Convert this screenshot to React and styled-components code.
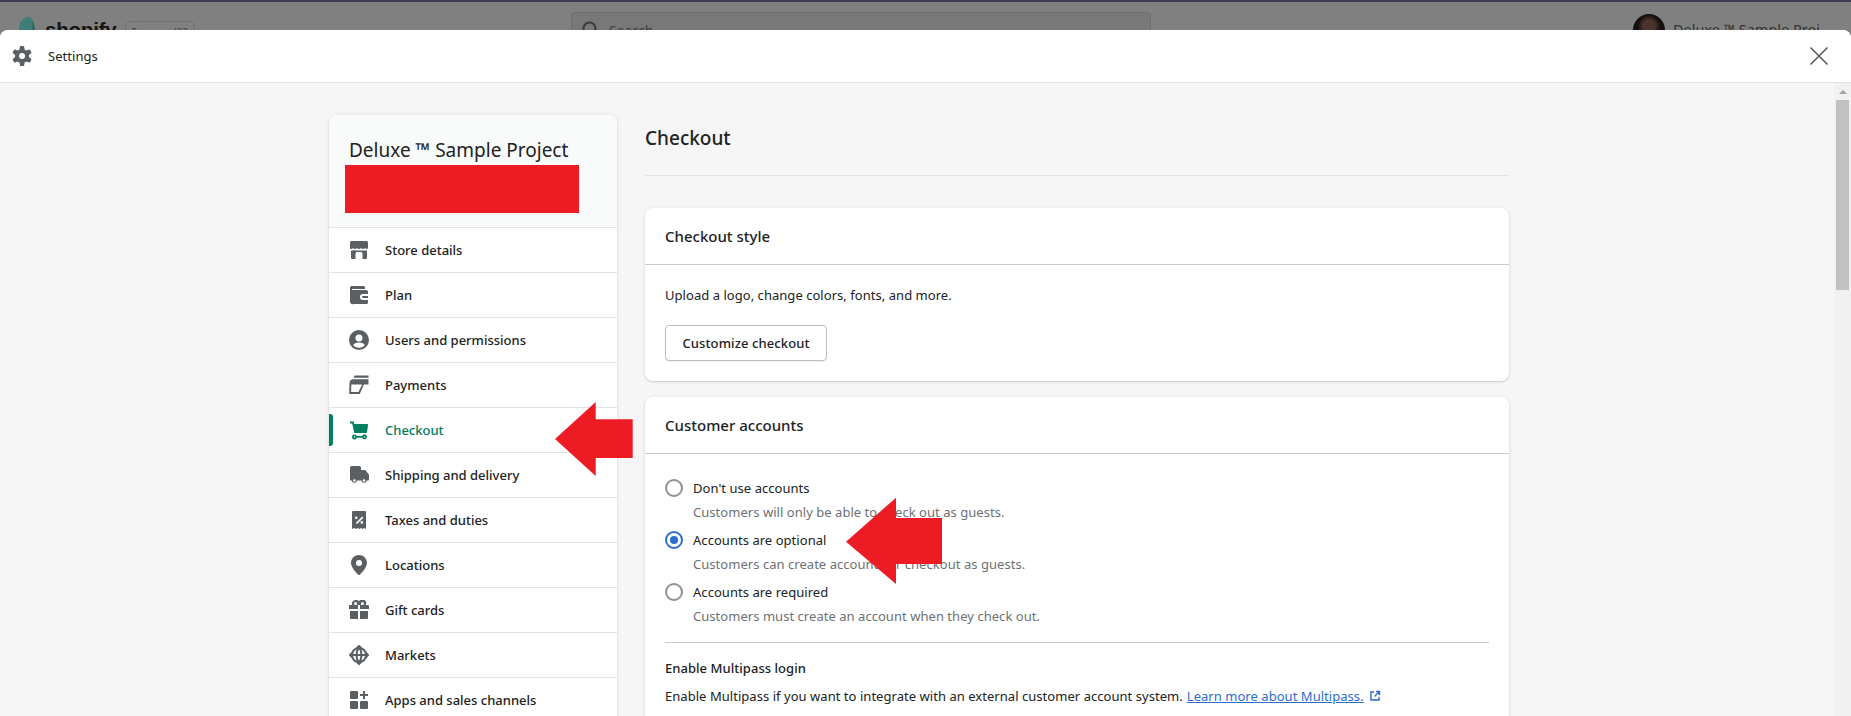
import React from "react";
import styled, { createGlobalStyle } from "styled-components";

const FONT = `"Noto Sans", "Open Sans", "Liberation Sans", sans-serif`;

const Global = createGlobalStyle`
  html, body { margin: 0; padding: 0; height: 100%; overflow: hidden; background: #808080; }
  body { font-family: ${FONT}; font-size: 14px; color: #202223; }
  * { box-sizing: border-box; }
`;

const Page = styled.div`position: relative; width: 1851px; height: 716px; overflow: hidden; display: flex; flex-direction: column;`;
const TopEdge = styled.div`height: 2px; background: #3a3c50; flex: none;`;
const Backdrop = styled.header`
  height: 28px; flex: none; overflow: hidden; background: #808080; display: flex; align-items: flex-start; color: #333;
  padding: 10px 32px 0 18px;
`;
const Brand = styled.div`display: flex; align-items: flex-start; width: 553px;`;
const BrandMark = styled.svg`margin-top: 4px; flex: none;`;
const BrandName = styled.span`margin: 6px 0 0 7px; font-family: "Liberation Sans", sans-serif; font-weight: 700; font-size: 20.5px; line-height: 24px; color: #141414; letter-spacing: -0.2px;`;
const Badge = styled.span`margin: 9px 0 0 8px; border: 1px solid #707070; border-radius: 6px; padding: 0 6px; font-size: 10px; line-height: 20px; height: 22px; color: #404040;`;
const SearchBox = styled.div`width: 580px; height: 36px; background: #787878; border: 1px solid #6e6e6e; border-radius: 4px; display: flex; align-items: center; gap: 8px; padding-left: 9px; font-size: 14px; color: #3d3d3d;`;
const Account = styled.div`margin: 2px 0 0 auto; display: flex; align-items: flex-start; gap: 8px;`;
const Avatar = styled.span`width: 32px; height: 32px; border-radius: 50%; background: radial-gradient(circle at 50% 38%, #4a332c 0 24%, #140f0f 44%); flex: none;`;
const AccountName = styled.span`font-size: 14.5px; line-height: 30px; color: #333; white-space: nowrap; width: 146px; overflow: hidden;`;

const Modal = styled.div`flex: 1; min-height: 0; background: #f6f6f7; border-radius: 8px 8px 0 0; display: flex; flex-direction: column; overflow: hidden;`;
const ModalBar = styled.div`height: 53px; flex: none; background: #fff; border-bottom: 1px solid #e1e3e5; display: flex; align-items: center; padding: 0 22px 0 12px; gap: 16px;`;
const ModalTitle = styled.span`font-size: 13px; line-height: 20px; color: #202223; letter-spacing: .04px;`;
const CloseButton = styled.button`margin-left: auto; background: none; border: 0; padding: 0; width: 20px; height: 20px; display: flex; color: #5c5f62;`;

const ModalBody = styled.div`flex: 1; min-height: 0; display: flex;`;
const Scroller = styled.div`flex: 1; min-width: 0; overflow: hidden; padding: 32px 0 0 329px; display: grid; grid-template-columns: 288px 864px; column-gap: 28px; align-items: start;`;

const Track = styled.div`width: 17px; flex: none; background: #f1f1f1; display: flex; flex-direction: column; align-items: center; padding-top: 7px;`;
const TrackArrow = styled.span`width: 0; height: 0; border-left: 4px solid transparent; border-right: 4px solid transparent; border-bottom: 4px solid #a3a3a3;`;
const Thumb = styled.div`width: 13px; height: 190px; margin-top: 6px; background: #c1c1c1;`;

const Nav = styled.nav`background: #fff; border-radius: 8px 8px 0 0; box-shadow: 0 0 5px rgba(23,24,24,.08), 0 1px 2px rgba(0,0,0,.12);`;
const NavHead = styled.div`height: 113px; background: #f9fafa; padding: 22px 16px 0 16px; border-radius: 8px 8px 0 0; border-bottom: 1px solid #e1e3e5;`;
const StoreName = styled.div`margin-left: 4px; font-size: 19px; line-height: 26px; color: #202223;`;
const Redaction = styled.div`width: 234px; height: 48px; margin-top: 2px; background: #ed1c24;`;
const NavItem = styled.a`
  position: relative; height: 45px; display: flex; align-items: center; gap: 16px; padding-left: 20px;
  border-bottom: 1px solid #e1e3e5; font-size: 13px; font-weight: 500; color: ${p => (p.$active ? "#007a5a" : "#202223")};
  & > svg { color: ${p => (p.$active ? "#008060" : "#5c5f62")}; flex: none; }
  ${p => p.$active && `&::before { content: ""; position: absolute; left: 0; top: 6px; bottom: 6px; width: 4px; border-radius: 0 3px 3px 0; background: #008060; }`}
`;

const Main = styled.main`display: flex; flex-direction: column;`;
const PageTitle = styled.h1`margin: 8px 0 0; font-size: 19px; font-weight: 500; line-height: 30px; color: #202223;`;
const Rule = styled.hr`margin: 22px 0 32px; border: 0; border-top: 1px solid #e1e3e5;`;
const Card = styled.section`background: #fff; border-radius: 8px; box-shadow: 0 0 5px rgba(23,24,24,.05), 0 1px 2px rgba(0,0,0,.15); margin-bottom: 16px;`;
const CardHead = styled.div`height: 57px; padding: 0 20px; display: flex; align-items: center; border-bottom: 1px solid #c9cccf;`;
const CardTitle = styled.h2`margin: 0; font-size: 15px; font-weight: 500; line-height: 20px; color: #202223;`;
const CardBody = styled.div`padding: 20px; letter-spacing: .04px;`;
const BodyText = styled.p`margin: 0; font-size: 13px; line-height: 20px; color: #202223;`;
const Button = styled.button`margin-top: 20px; height: 36px; width: 162px; background: #fff; border: 1px solid #babfc3; border-radius: 4px; font: 500 13px/20px ${FONT}; letter-spacing: .1px; color: #202223; box-shadow: 0 1px 0 rgba(0,0,0,.05); display: block;`;
const Radios = styled.div`padding-top: 4px;`;
const RadioRow = styled.label`display: grid; grid-template-columns: 18px 1fr; column-gap: 10px; row-gap: 4px; align-items: center; margin-bottom: 8px;`;
const RadioDot = styled.span`
  width: 18px; height: 18px; border-radius: 50%; border: 2px solid ${p => (p.$on ? "#2c6ecb" : "#8c9196")}; display: flex; align-items: center; justify-content: center; background: #fff;
  &::after { content: ""; width: 8px; height: 8px; border-radius: 50%; background: ${p => (p.$on ? "#2c6ecb" : "transparent")}; }
`;
const RadioLabel = styled.span`font-size: 13px; line-height: 20px;`;
const RadioHelp = styled.span`grid-column: 2; font-size: 13px; line-height: 20px; color: #6d7175;`;
const SubRule = styled.hr`margin: 16px 0 15px; border: 0; border-top: 1px solid #c9cccf;`;
const SubTitle = styled.h3`margin: 0; font-size: 13px; font-weight: 500; line-height: 20px;`;
const Description = styled.p`margin: 8px 0 0; font-size: 13px; line-height: 20px; display: flex; align-items: center; white-space: nowrap; gap: 5px;`;
const Link = styled.a`color: #2c6ecb; text-decoration: underline; margin-left: -1px;`;
const Annotation = styled.svg`position: absolute; left: 0; top: 0; pointer-events: none;`;

const I = ({ children }) => <svg width="20" height="20" viewBox="0 0 20 20" fill="currentColor">{children}</svg>;

const icons = {
  store: <I><path d="M1 2.500A1.500 1.500 0 0 1 2.500 1h15A1.500 1.500 0 0 1 19 2.500V8a1 1 0 0 1-1 .9c-.9 0-1.400-.4-2-1-.5.6-1.200 1-2 1s-1.500-.4-2-1c-.5.6-1.200 1-2 1s-1.500-.4-2-1c-.5.6-1.200 1-2 1s-1.500-.4-2-1c-.6.6-1.100 1-2 1a1 1 0 0 1-1-.9V2.500Z"/><path d="M2 10.500c1.300.2 2.200-.1 3-.6.800.5 1.600.7 2.500.7H18v7.400a1 1 0 0 1-1 1h-3.500v-5.500a1.500 1.500 0 0 0-1.500-1.500H8a1.500 1.500 0 0 0-1.500 1.500V19H3a1 1 0 0 1-1-1v-7.500Z"/></I>,
  plan: <I><path d="M2.500 1h12A1.500 1.500 0 0 1 16 2.500V4H3v1h14a2 2 0 0 1 2 1.500V9h-5a3 3 0 0 0 0 6h5v2.500a1.500 1.500 0 0 1-1.500 1.500h-13A2.500 2.500 0 0 1 1 16.500v-14A1.500 1.500 0 0 1 2.500 1Z"/><path d="M14 11h5v2h-5a1 1 0 0 1 0-2Z"/></I>,
  user: <I><path fillRule="evenodd" d="M10 0a10 10 0 1 0 0 20 10 10 0 0 0 0-20Zm0 4.500a3.500 3.500 0 1 1 0 7 3.500 3.500 0 0 1 0-7ZM4.200 15.200C5 13.500 7 12.500 10 12.500s5 1 5.800 2.700A7.500 7.500 0 0 1 10 18a7.500 7.500 0 0 1-5.800-2.800Z"/></I>,
  pay: <I><path d="M5 1.500a1 1 0 0 1 1-1h13.500V2.700H5V1.500Z"/><path fillRule="evenodd" d="M4.500 4.300h15V9.500H14.800L10.800 19H1a.8.8 0 0 1-.8-.8L.5 8.300a4 4 0 0 1 4-4Zm-2.200 5.500-.2 7.300h7.400l3.600-7.700H2.400l-.1.4Z"/></I>,
  cart: <I><path d="M1 1.500h3a1 1 0 0 1 1 .9L5.200 4H18a1 1 0 0 1 1 1.200l-1 7a1 1 0 0 1-1 .8H6a1 1 0 0 1-1-.9L3.200 3.500H1v-2Z"/><path fillRule="evenodd" d="M5.500 14.500a2.500 2.500 0 1 0 2.400 3.200h5.200a2.500 2.500 0 1 0 0-1.700H7.900a2.500 2.500 0 0 0-2.400-1.500Zm0 1.800a.7.700 0 1 1 0 1.400.7.700 0 0 1 0-1.400Zm10 0a.7.700 0 1 1 0 1.400.7.700 0 0 1 0-1.400Z"/></I>,
  truck: <I><path fillRule="evenodd" d="M1 2.500A1.500 1.500 0 0 1 2.500 1h8A1.500 1.500 0 0 1 12 2.500V5h3.500a1.500 1.500 0 0 1 1.200.600l2.800 3.400c.3.300.5.700.5 1.100V14.500a1 1 0 0 1-1 1h-1.200a2.800 2.800 0 0 1-5.500.1H8.200a2.800 2.800 0 0 1-5.500-.1H2a1 1 0 0 1-1-1v-12Zm4.500 11.700a1.300 1.300 0 1 0 0 2.600 1.300 1.300 0 0 0 0-2.600Zm9.500 0a1.300 1.300 0 1 0 0 2.600 1.300 1.300 0 0 0 0-2.600Z"/></I>,
  tax: <I><path fillRule="evenodd" d="M4 1h12a1 1 0 0 1 1 1v17l-1.700-1-1.600 1-1.700-1-1.600 1-1.700-1-1.600 1-1.700-1L3 19V2a1 1 0 0 1 1-1Zm3.200 5.400a1.300 1.300 0 1 0 0 2.600 1.300 1.300 0 0 0 0-2.600Zm6 .1-6.400 6.400 1.200 1.200 6.400-6.400-1.200-1.200Zm-.4 4.600a1.300 1.300 0 1 0 0 2.600 1.300 1.300 0 0 0 0-2.600Z"/></I>,
  pin: <I><path fillRule="evenodd" d="M10 0C5.600 0 2 3.500 2 7.800c0 4.800 5 9.800 7.200 11.900a1.200 1.200 0 0 0 1.600 0C13 17.600 18 12.600 18 7.800 18 3.500 14.400 0 10 0Zm0 5a3 3 0 1 1 0 6 3 3 0 0 1 0-6Z"/></I>,
  gift: <I><path fillRule="evenodd" d="M6.500 0A3.500 3.500 0 0 0 3.300 5H1a1 1 0 0 0-1 1v3h9V5h2v4h9V6a1 1 0 0 0-1-1h-2.300A3.500 3.500 0 0 0 10 1.400 3.500 3.500 0 0 0 6.500 0Zm0 2a1.500 1.500 0 0 1 1.500 1.500V5H6.500a1.500 1.500 0 1 1 0-3Zm7 0a1.500 1.500 0 0 1 0 3H12V3.500A1.500 1.500 0 0 1 13.500 2Z"/><path d="M1 11h8v8H2a1 1 0 0 1-1-1v-7Zm10 0h8v7a1 1 0 0 1-1 1h-7v-8Z"/></I>,
  globe: <I><path fillRule="evenodd" d="M9.300.3a1 1 0 0 1 1.400 0l2 2A8.500 8.500 0 0 1 17.700 7.300l2 2a1 1 0 0 1 0 1.400l-2 2a8.500 8.500 0 0 1-5 5l-2 2a1 1 0 0 1-1.400 0l-2-2a8.500 8.500 0 0 1-5-5l-2-2a1 1 0 0 1 0-1.400l2-2a8.500 8.500 0 0 1 5-5l2-2ZM4 9h2.600c.1-1.700.5-3.200 1.100-4.500A6 6 0 0 0 4 9Zm0 2a6 6 0 0 0 3.700 4.500A12 12 0 0 1 6.600 11H4Zm4.600 0c.2 2 .7 3.600 1.400 4.800.7-1.200 1.200-2.800 1.400-4.800H8.600Zm2.800-2c-.2-2-.7-3.600-1.400-4.800-.7 1.200-1.200 2.800-1.400 4.800h2.800Zm1 6.500A6 6 0 0 0 16 11h-2.600c-.1 1.700-.5 3.200-1 4.500ZM16 9a6 6 0 0 0-3.700-4.500c.6 1.300 1 2.800 1.100 4.500H16Z"/></I>,
  apps: <I><rect x="1" y="1" width="8" height="8" rx="1"/><rect x="1" y="11" width="8" height="8" rx="1"/><rect x="11" y="11" width="8" height="8" rx="1"/><path d="M14 1h2v3h3v2h-3v3h-2V6h-3V4h3V1Z"/></I>,
};

const navItems = [
  ["store", "Store details"], ["plan", "Plan"], ["user", "Users and permissions"], ["pay", "Payments"],
  ["cart", "Checkout", true], ["truck", "Shipping and delivery"], ["tax", "Taxes and duties"], ["pin", "Locations"],
  ["gift", "Gift cards"], ["globe", "Markets"], ["apps", "Apps and sales channels"],
];

const radios = [
  ["Don't use accounts", "Customers will only be able to check out as guests.", false],
  ["Accounts are optional", "Customers can create accounts or checkout as guests.", true],
  ["Accounts are required", "Customers must create an account when they check out.", false],
];

export default function App() {
  return (
    <Page>
      <Global />
      <TopEdge />
      <Backdrop>
        <Brand>
          <BrandMark width="20" height="24" viewBox="0 0 20 24">
            <path d="M2 6.500C4 5.500 6 .8 10 .8c2.500 0 3 1.200 3.500 2.500L15 4l3.500 16-13 3L0 20Z" fill="#3f7d78" />
            <path d="M15 4l3.500 16-5 3Z" fill="#2f625c" />
          </BrandMark>
          <BrandName>shopify</BrandName>
          <Badge>Summer '22</Badge>
        </Brand>
        <SearchBox>
          <svg width="20" height="20" viewBox="0 0 20 20" fill="none" stroke="#3a3a3a" strokeWidth="2"><circle cx="8.500" cy="8.500" r="6" /><path d="m13 13 5 5" /></svg>
          Search
        </SearchBox>
        <Account>
          <Avatar />
          <AccountName>Deluxe ™ Sample Project</AccountName>
        </Account>
      </Backdrop>
      <Modal>
        <ModalBar>
          <svg width="20" height="20" viewBox="0 0 20 20" fill="#5c5f62"><path fillRule="evenodd" d="M8.900 0a1 1 0 0 0-.99.859l-.37 2.598A6.993 6.993 0 0 0 5.620 4.570l-2.437-.98a1 1 0 0 0-1.239.428L.812 5.981a1 1 0 0 0 .248 1.287l2.066 1.621A7.060 7.060 0 0 0 3.045 10c0 .377.03.748.081 1.111l-2.066 1.620a1 1 0 0 0-.248 1.288l1.132 1.962a1 1 0 0 0 1.239.428l2.438-.979a6.995 6.995 0 0 0 1.923 1.113l.372 2.598a1 1 0 0 0 .99.859h2.265a1 1 0 0 0 .99-.859l.371-2.598a6.995 6.995 0 0 0 1.924-1.113l2.438.979a1 1 0 0 0 1.238-.428l1.133-1.962a1 1 0 0 0-.248-1.287l-2.066-1.621c.051-.363.08-.734.08-1.111 0-.377-.029-.748-.08-1.111l2.066-1.620a1 1 0 0 0 .248-1.288l-1.133-1.962a1 1 0 0 0-1.238-.428l-2.438.979a6.993 6.993 0 0 0-1.924-1.113L12.160.859A1 1 0 0 0 11.170 0H8.900ZM10.040 7a3 3 0 1 1 0 6 3 3 0 0 1 0-6Z" /></svg>
          <ModalTitle>Settings</ModalTitle>
          <CloseButton aria-label="Close">
            <svg width="20" height="20" viewBox="0 0 20 20" fill="none" stroke="currentColor" strokeWidth="1.700"><path d="m1.500 1.500 17 17M18.500 1.500l-17 17" /></svg>
          </CloseButton>
        </ModalBar>
        <ModalBody>
          <Scroller>
            <Nav>
              <NavHead>
                <StoreName>Deluxe ™ Sample Project</StoreName>
                <Redaction />
              </NavHead>
              {navItems.map(([icon, label, active]) => (
                <NavItem key={label} $active={active}>{icons[icon]}{label}</NavItem>
              ))}
            </Nav>
            <Main>
              <PageTitle>Checkout</PageTitle>
              <Rule />
              <Card>
                <CardHead><CardTitle>Checkout style</CardTitle></CardHead>
                <CardBody>
                  <BodyText>Upload a logo, change colors, fonts, and more.</BodyText>
                  <Button>Customize checkout</Button>
                </CardBody>
              </Card>
              <Card>
                <CardHead><CardTitle>Customer accounts</CardTitle></CardHead>
                <CardBody>
                  <Radios>
                    {radios.map(([label, help, on]) => (
                      <RadioRow key={label}>
                        <RadioDot $on={on} />
                        <RadioLabel>{label}</RadioLabel>
                        <RadioHelp>{help}</RadioHelp>
                      </RadioRow>
                    ))}
                  </Radios>
                  <SubRule />
                  <SubTitle>Enable Multipass login</SubTitle>
                  <Description>
                    Enable Multipass if you want to integrate with an external customer account system.
                    <Link>Learn more about Multipass.</Link>
                    <svg width="12" height="12" viewBox="0 0 12 12" fill="none" stroke="#2c6ecb" strokeWidth="1.400"><path d="M5 2H2v8h8V7M7 1.500h3.500V5M10.500 1.500 5.500 6.500" /></svg>
                  </Description>
                </CardBody>
              </Card>
            </Main>
          </Scroller>
          <Track><TrackArrow /><Thumb /></Track>
        </ModalBody>
      </Modal>
      <Annotation width="1851" height="716" viewBox="0 0 1851 716">
        <path fill="#ed1c24" d="M555 439 595.700 402V419.300H632.700V458H595.700V476Z" />
        <path fill="#ed1c24" d="M846 541.700 896 497.700V518H942V564H896V584Z" />
      </Annotation>
    </Page>
  );
}
